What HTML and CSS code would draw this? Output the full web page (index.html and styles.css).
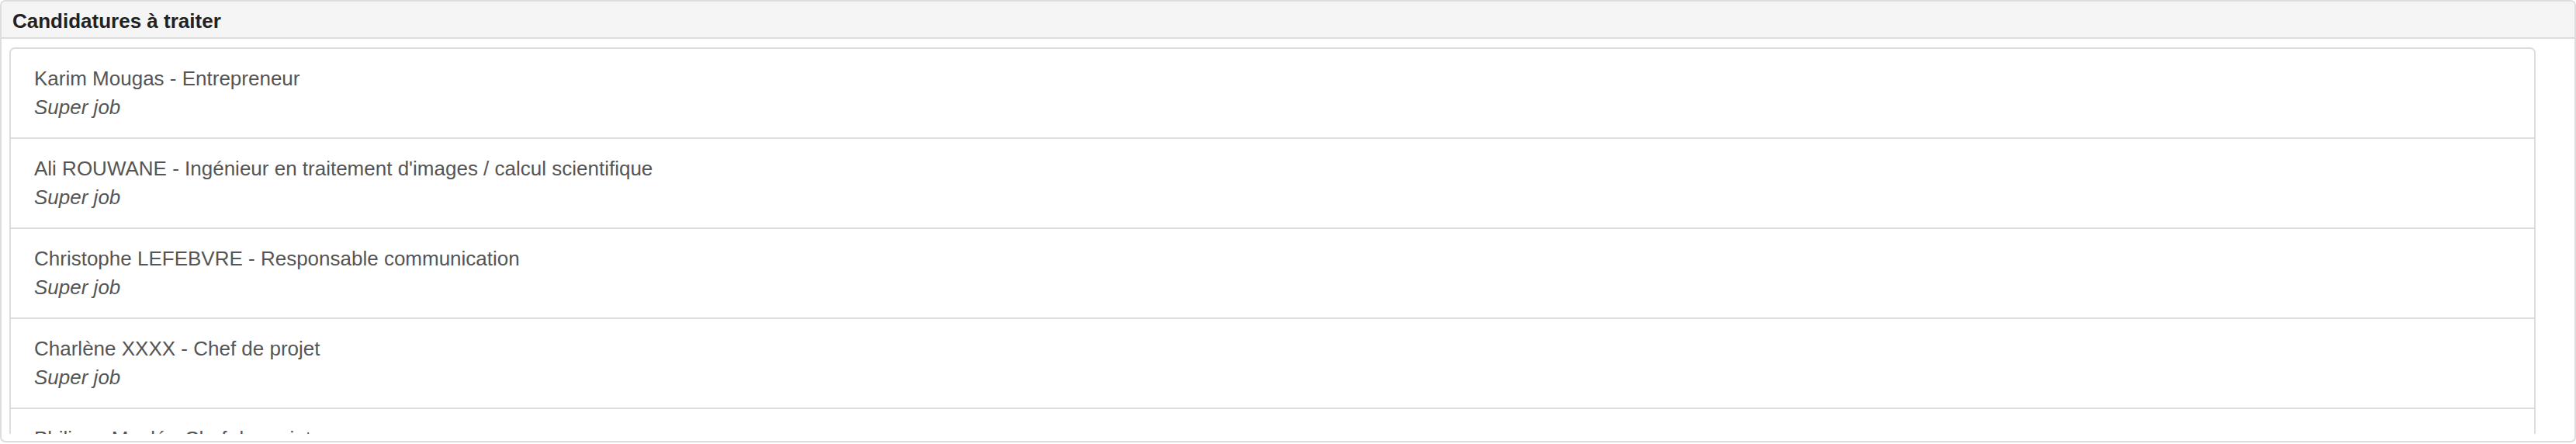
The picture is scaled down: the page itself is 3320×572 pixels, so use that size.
FILE: index.html
```html
<!DOCTYPE html>
<html lang="fr">
<head>
<meta charset="utf-8">
<title>Candidatures à traiter</title>
<link rel="stylesheet" href="styles.css">
</head>
<body>
<div class="panel">
  <div class="panel-heading">Candidatures à traiter</div>
  <div class="panel-body">
    <div class="scroller">
      <ul class="list">
        <li class="item"><div class="title">Karim Mougas - Entrepreneur</div><div class="sub">Super job</div></li>
        <li class="item"><div class="title">Ali ROUWANE - Ingénieur en traitement d'images / calcul scientifique</div><div class="sub">Super job</div></li>
        <li class="item"><div class="title">Christophe LEFEBVRE - Responsable communication</div><div class="sub">Super job</div></li>
        <li class="item"><div class="title">Charlène XXXX - Chef de projet</div><div class="sub">Super job</div></li>
        <li class="item"><div class="title">Philippe Moulé - Chef de projet</div><div class="sub">Super job</div></li>
      </ul>
    </div>
  </div>
</div>
</body>
</html>
```

FILE: styles.css
```css
html, body {
  margin: 0;
  padding: 0;
  background: #fff;
}
body {
  font-family: "Liberation Sans", Arial, sans-serif;
  font-size: 26px;
  color: #555;
}
.panel {
  box-sizing: border-box;
  width: 3320px;
  height: 570px;
  border: 2px solid #ddd;
  border-radius: 7px;
  overflow: hidden;
  display: flex;
  flex-direction: column;
}
.panel-heading {
  flex: none;
  background: #f5f5f5;
  border-bottom: 2px solid #ddd;
  padding: 10px 14px 6px;
  line-height: 30px;
  font-weight: bold;
  color: #222;
}
.panel-body {
  flex: 1;
  min-height: 0;
  padding: 11px 50px 9px 10px;
  display: flex;
  flex-direction: column;
}
.scroller {
  flex: 1;
  min-height: 0;
  overflow: hidden;
}
.list {
  list-style: none;
  margin: 0;
  padding: 0;
  border: 2px solid #ddd;
  border-radius: 7px;
}
.item {
  padding: 20px 30px 20px;
  line-height: 37px;
  border-top: 2px solid #ddd;
}
.item:first-child {
  border-top: none;
}
.sub {
  font-style: italic;
}
```
